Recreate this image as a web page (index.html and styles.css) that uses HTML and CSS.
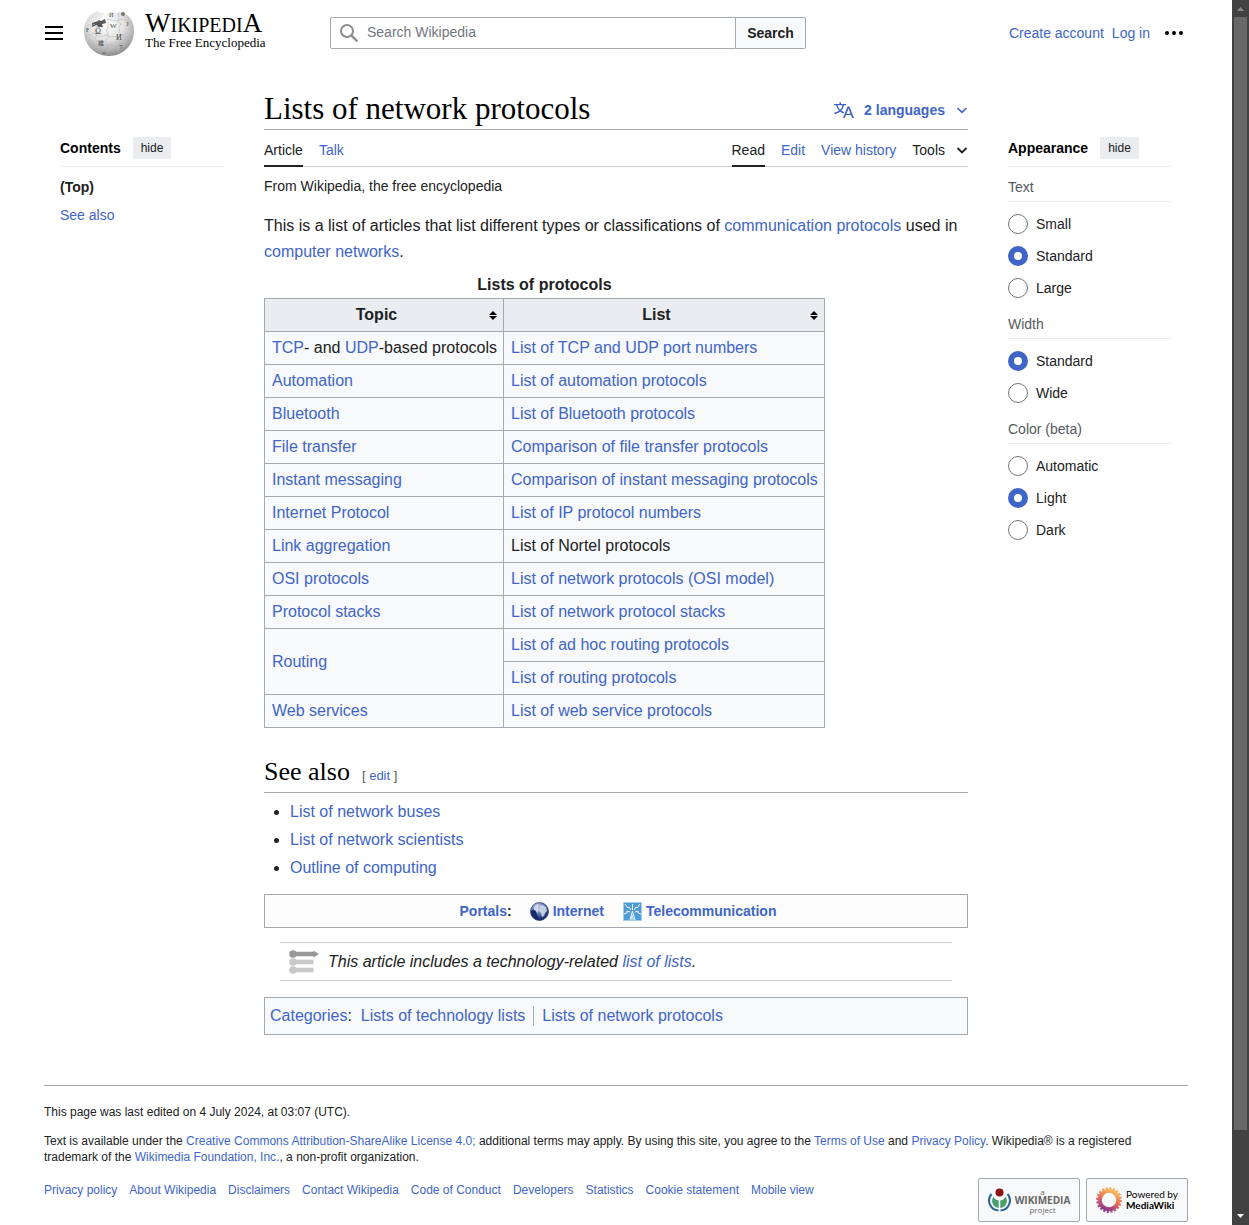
FILE: index.html
```html
<!DOCTYPE html>
<html lang="en">
<head>
<meta charset="utf-8">
<meta name="viewport" content="width=device-width, initial-scale=1">
<title>Lists of network protocols - Wikipedia</title>
<link rel="stylesheet" href="styles.css">
</head>
<body>
<div class="page">
  <header class="header">
    <button class="icon-button menu-button" type="button" aria-label="Main menu">
      <svg width="20" height="20" viewBox="0 0 20 20"><path d="M1 3h18v2H1zm0 6h18v2H1zm0 6h18v2H1z"/></svg>
    </button>
    <a class="logo" href="#">
      <svg class="globe" width="50" height="46" viewBox="0 0 50 46" aria-hidden="true">
        <defs>
          <radialGradient id="ball" cx="45%" cy="30%" r="70%">
            <stop offset="0" stop-color="#fff"/><stop offset=".5" stop-color="#e2e2e2"/><stop offset=".85" stop-color="#aaa"/><stop offset="1" stop-color="#888"/>
          </radialGradient>
        </defs>
        <path fill="url(#ball)" d="M11 2l4-1 1 2 4 0-1 4-4 2-2 4 3 1 6-2 2-4-1-4 4-2 5 1 4-1 4 2 3 1c5 4 7 9 7 16 0 14-11 25-25 25S0 35 0 21C0 13 4 6 11 2z"/>
        <path fill="#5a5a5a" d="M8 13l6-2 1-1 2 1 4-2 1 4-4 1 1 3-5 0-1-2-5 2z"/>
        <path fill="none" stroke="#bbb" stroke-width=".6" d="M3 14l5 2 2-2 3 3 3 1M1 25l7 0 1-2 2 0 1 3 9 0 1-2 2 1 1 2 11-1 1-2 2 0 1 3 8-2M5 36l7-1 1 2 2 0 0-3 11 2 1-2 2 1 0 2 10-3 1-2 3 0M12 16l1 9-2 3 2 3-1 5 4 7M24 12l0 6-2 2 2 3 0 5-3 3 3 3 0 10M35 4l-1 8 3 2-2 3 1 9-2 3 2 2-2 12M23 9l10 2 4-2 8 2"/>
        <circle cx="39" cy="4" r="2" fill="#777"/>
        <g fill="#444" font-family="Liberation Serif, serif" font-size="8">
          <text x="11" y="24">Ω</text><text x="26" y="18" font-size="7">W</text><text x="42" y="16" font-size="7">J</text><text x="32" y="30">И</text><text x="14" y="35" font-size="6" font-family="Noto Sans CJK JP, sans-serif">維</text><text x="25" y="7" font-size="6">И</text><text x="35" y="39" font-size="7">7</text><text x="2" y="22" font-size="6">F</text><text x="19" y="44" font-size="5">n</text>
        </g>
      </svg>
      <span class="logo-text">
        <span class="wordmark"><span class="cap">W</span>IKIPEDI<span class="cap">A</span></span>
        <span class="tagline">The Free Encyclopedia</span>
      </span>
    </a>
    <form class="search" role="search">
      <label class="search-field">
        <svg width="20" height="20" viewBox="0 0 20 20" fill="none" stroke="#8d8d8d" aria-hidden="true"><circle cx="8" cy="8" r="6" stroke-width="2"/><path d="M12.3 12.3l6 6" stroke-width="2.4"/></svg>
        <input type="search" placeholder="Search Wikipedia" aria-label="Search Wikipedia">
      </label>
      <button class="search-button" type="button">Search</button>
    </form>
    <nav class="user-links" aria-label="Personal tools">
      <a href="#">Create account</a>
      <a href="#">Log in</a>
      <button class="icon-button dots" type="button" aria-label="More options">
        <svg width="20" height="20" viewBox="0 0 20 20"><circle cx="3" cy="10" r="2"/><circle cx="10" cy="10" r="2"/><circle cx="17" cy="10" r="2"/></svg>
      </button>
    </nav>
  </header>

  <div class="columns">
    <nav class="side toc" aria-label="Contents">
      <div class="side-head"><h2>Contents</h2><button class="hide" type="button">hide</button></div>
      <ul class="toc-list">
        <li><a class="current" href="#">(Top)</a></li>
        <li><a href="#see-also">See also</a></li>
      </ul>
    </nav>

    <main class="content">
      <div class="title-row">
        <h1>Lists of network protocols</h1>
        <button class="languages" type="button">
          <svg width="20" height="20" viewBox="0 0 20 20" fill="currentColor" aria-hidden="true"><path d="M20 18h-1.44a.6.6 0 0 1-.4-.12.8.8 0 0 1-.23-.31L17 15h-5l-1 2.54a.8.8 0 0 1-.22.3.6.6 0 0 1-.4.14H9l4.55-11.47h1.89zm-3.53-4.31L14.89 9.5a12 12 0 0 1-.39-1.24q-.09.37-.19.69l-.19.56-1.58 4.19zm-6.3-1.58a13.4 13.4 0 0 1-2.91-1.41 11.46 11.46 0 0 0 2.81-5.37H12V4H7.31a4 4 0 0 0-.2-.56C6.87 2.79 6.6 2 6.6 2l-1.47.5s.4.89.6 1.5H0v1.33h2.15A11.23 11.23 0 0 0 5 10.7a17.2 17.2 0 0 1-5 2.1q.56.82.87 1.38a23.3 23.3 0 0 0 5.22-2.51 15.6 15.6 0 0 0 3.56 1.77zM3.63 5.33h4.91a8.1 8.1 0 0 1-2.45 4.45 9.1 9.1 0 0 1-2.46-4.45"/></svg>
          <span>2 languages</span>
          <svg width="12" height="12" viewBox="0 0 12 12" fill="none" stroke="currentColor" stroke-width="1.6" aria-hidden="true"><path d="M1.5 4L6 8.4 10.500 4"/></svg>
        </button>
      </div>
      <div class="toolbar">
        <nav class="tabs" aria-label="Namespaces"><a class="active" href="#">Article</a><a href="#">Talk</a></nav>
        <nav class="tabs" aria-label="Views"><a class="active" href="#">Read</a><a href="#">Edit</a><a href="#">View history</a>
          <button class="tools" type="button"><span>Tools</span>
            <svg width="12" height="12" viewBox="0 0 12 12" fill="none" stroke="#202122" stroke-width="1.8" aria-hidden="true"><path d="M1.500 4L6 8.400 10.500 4"/></svg>
          </button>
        </nav>
      </div>
      <p class="site-sub">From Wikipedia, the free encyclopedia</p>
      <p class="intro">This is a list of articles that list different types or classifications of <a href="#">communication protocols</a> used in <a href="#">computer networks</a>.</p>

      <table class="wikitable">
        <caption>Lists of protocols</caption>
        <thead>
          <tr>
            <th scope="col"><div class="sort"><span>Topic</span><svg width="8" height="9" viewBox="0 0 8 9" aria-hidden="true"><path d="M4 0l4 4H0zM0 5h8L4 9z"/></svg></div></th>
            <th scope="col"><div class="sort"><span>List</span><svg width="8" height="9" viewBox="0 0 8 9" aria-hidden="true"><path d="M4 0l4 4H0zM0 5h8L4 9z"/></svg></div></th>
          </tr>
        </thead>
        <tbody>
          <tr><td><a href="#">TCP</a>- and <a href="#">UDP</a>-based protocols</td><td><a href="#">List of TCP and UDP port numbers</a></td></tr>
          <tr><td><a href="#">Automation</a></td><td><a href="#">List of automation protocols</a></td></tr>
          <tr><td><a href="#">Bluetooth</a></td><td><a href="#">List of Bluetooth protocols</a></td></tr>
          <tr><td><a href="#">File transfer</a></td><td><a href="#">Comparison of file transfer protocols</a></td></tr>
          <tr><td><a href="#">Instant messaging</a></td><td><a href="#">Comparison of instant messaging protocols</a></td></tr>
          <tr><td><a href="#">Internet Protocol</a></td><td><a href="#">List of IP protocol numbers</a></td></tr>
          <tr><td><a href="#">Link aggregation</a></td><td>List of Nortel protocols</td></tr>
          <tr><td><a href="#">OSI protocols</a></td><td><a href="#">List of network protocols (OSI model)</a></td></tr>
          <tr><td><a href="#">Protocol stacks</a></td><td><a href="#">List of network protocol stacks</a></td></tr>
          <tr><td rowspan="2"><a href="#">Routing</a></td><td><a href="#">List of ad hoc routing protocols</a></td></tr>
          <tr><td><a href="#">List of routing protocols</a></td></tr>
          <tr><td><a href="#">Web services</a></td><td><a href="#">List of web service protocols</a></td></tr>
        </tbody>
      </table>

      <div class="section-head" id="see-also">
        <h2>See also</h2>
        <span class="edit">[ <a href="#">edit</a> ]</span>
      </div>
      <ul class="bullets">
        <li><a href="#">List of network buses</a></li>
        <li><a href="#">List of network scientists</a></li>
        <li><a href="#">Outline of computing</a></li>
      </ul>

      <div class="portals">
        <span class="portals-label"><a href="#">Portals</a>:</span>
        <span class="portal portal-internet">
          <svg width="19" height="19" viewBox="0 0 19 19" aria-hidden="true">
            <defs><radialGradient id="earth" cx="40%" cy="25%" r="75%"><stop offset="0" stop-color="#c4cfe6"/><stop offset=".5" stop-color="#6279b0"/><stop offset="1" stop-color="#0d2160"/></radialGradient></defs>
            <circle cx="9.500" cy="9.500" r="9" fill="url(#earth)" stroke="#33406b" stroke-width=".8"/>
            <path fill="#142b70" d="M1 9l3-2 2 2 1 4 2 2-1 3C4 17 1 14 1 9z"/>
            <path fill="#d5ddec" opacity=".85" d="M4 5l3-3 2 1-1 3 1 2-2 3-1-2-2-1zM10 4l2-1 4 2 1 4-2 2-1 3-2 1-1-4-2-2z"/>
          </svg>
          <a href="#">Internet</a>
        </span>
        <span class="portal portal-telecom">
          <svg width="19" height="19" viewBox="0 0 19 19" aria-hidden="true">
            <path fill="#4f9bd5" stroke="#a5cdea" d="M.5.500h18v18H.5z"/>
            <path fill="none" stroke="#eef6fc" stroke-width="1" d="M9.500 8v-6M8 8L6 5 5 6 2 2M11 8l2-3 1 1 3-4M7 10l-3-1 0 2-3 1M12 10l3-1 0 2 3 1M9.500 9L7 18M9.500 9l2.500 9M8.500 13h2l-3 4h4l-3-3"/>
          </svg>
          <a href="#">Telecommunication</a>
        </span>
      </div>

      <div class="notice">
        <svg width="30" height="24" viewBox="0 0 30 24" aria-hidden="true">
          <g fill="#c8c8c8"><circle cx="4" cy="12" r="3.800"/><path d="M4 9.700h20.500v4.600H4z"/><circle cx="4" cy="20" r="3.800"/><path d="M4 17.700h20.500v4.600H4z"/></g>
          <path fill="#989898" d="M4 1.700h20.500V.500L30 4l-5.500 3.500V6.300H4z"/><circle cx="4" cy="4" r="3.800" fill="#989898"/>
        </svg>
        <i>This article includes a technology-related <a href="#">list of lists</a>.</i>
      </div>

      <div class="categories">
        <span><a href="#">Categories</a>:</span>
        <ul>
          <li><a href="#">Lists of technology lists</a></li>
          <li><a href="#">Lists of network protocols</a></li>
        </ul>
      </div>
    </main>

    <aside class="side appearance">
      <div class="side-head"><h2>Appearance</h2><button class="hide" type="button">hide</button></div>
      <fieldset>
        <legend>Text</legend>
        <label><input type="radio" name="text"><span>Small</span></label>
        <label><input type="radio" name="text" checked><span>Standard</span></label>
        <label><input type="radio" name="text"><span>Large</span></label>
      </fieldset>
      <fieldset>
        <legend>Width</legend>
        <label><input type="radio" name="width" checked><span>Standard</span></label>
        <label><input type="radio" name="width"><span>Wide</span></label>
      </fieldset>
      <fieldset>
        <legend>Color (beta)</legend>
        <label><input type="radio" name="color"><span>Automatic</span></label>
        <label><input type="radio" name="color" checked><span>Light</span></label>
        <label><input type="radio" name="color"><span>Dark</span></label>
      </fieldset>
    </aside>
  </div>

  <footer class="footer">
    <p>This page was last edited on 4 July 2024, at 03:07 (UTC).</p>
    <p>Text is available under the <a href="#">Creative Commons Attribution-ShareAlike License 4.0;</a> additional terms may apply. By using this site, you agree to the <a href="#">Terms of Use</a> and <a href="#">Privacy Policy</a>. Wikipedia® is a registered trademark of the <a href="#">Wikimedia Foundation, Inc.</a>, a non-profit organization.</p>
    <div class="footer-row">
      <nav class="footer-links" aria-label="Footer">
        <a href="#">Privacy policy</a><a href="#">About Wikipedia</a><a href="#">Disclaimers</a><a href="#">Contact Wikipedia</a><a href="#">Code of Conduct</a><a href="#">Developers</a><a href="#">Statistics</a><a href="#">Cookie statement</a><a href="#">Mobile view</a>
      </nav>
      <div class="badges">
        <a class="badge" href="#">
          <svg width="23" height="24" viewBox="0 0 23 24" aria-hidden="true">
            <path fill="none" stroke="#2a6496" stroke-width="2" d="M3.500 6a10 10 0 0 0 7 16.500M19.500 6a10 10 0 0 1-7 16.500"/>
            <path fill="#4a9e6b" d="M5.800 8.500c.5 2.500 2 3.500 4.900 4v7.500A7 7 0 0 1 5.800 8.500zM17.200 8.500c-.5 2.500-2 3.500-4.900 4v7.500a7 7 0 0 0 4.900-11.500z"/>
            <circle cx="11.500" cy="4.500" r="4" fill="#8e1313"/>
          </svg>
          <span class="wikimedia"><small>a</small><b>WIKIMEDIA</b><small>project</small></span>
        </a>
        <a class="badge" href="#">
          <svg width="26" height="26" viewBox="-13 -13 26 26" aria-hidden="true">
            <defs>
              <linearGradient id="sun" x1=".7" y1="0" x2=".3" y2="1"><stop offset="0" stop-color="#fbbc5c"/><stop offset=".5" stop-color="#ee6c55"/><stop offset="1" stop-color="#8c3a8e"/></linearGradient>
            </defs>
            <circle r="9.200" fill="none" stroke="url(#sun)" stroke-width="4"/>
            <circle r="11.600" fill="none" stroke="url(#sun)" stroke-width="2.600" stroke-dasharray="2 1.644"/>
          </svg>
          <span class="mediawiki">Powered by<b>MediaWiki</b></span>
        </a>
      </div>
    </div>
  </footer>
</div>
<div class="scrollbar" aria-hidden="true">
  <svg class="up" width="7" height="4" viewBox="0 0 7 4"><path d="M0 4l3.500-4L7 4z"/></svg>
  <div class="thumb"></div>
  <svg class="down" width="7" height="4" viewBox="0 0 7 4"><path d="M0 0h7L3.500 4z"/></svg>
</div>
</body>
</html>
```
FILE: styles.css
```css
* { box-sizing: border-box; }

html { scrollbar-width: none; }

body {
  margin: 0;
  display: flex;
  align-items: flex-start;
  background: #fff;
  color: #202122;
  font: 14px/22px "Liberation Sans", Arial, sans-serif;
}

a { color: #4065c8; text-decoration: none; }
a:hover { text-decoration: underline; }
h1, h2, p, ul, fieldset { margin: 0; padding: 0; }
ul { list-style: none; }
button { font: inherit; color: inherit; border: 0; background: none; padding: 0; cursor: pointer; }
svg { display: block; flex: none; }

.page { flex: 1; min-width: 0; padding: 0 44px; }

/* Header */
.header { display: flex; align-items: center; height: 66px; }
.menu-button { margin-right: 20px; }
.logo { display: flex; align-items: center; gap: 11px; width: 246px; color: #000; }
.logo:hover { text-decoration: none; }
.logo-text { padding-bottom: 4px; font-family: "Liberation Serif", serif; white-space: nowrap; }
.wordmark { display: block; font-size: 20px; line-height: 22px; }
.cap { font-size: 27px; }
.tagline { display: block; font-size: 13px; line-height: 14px; }
.search { display: flex; flex: 0 1 476px; height: 32px; }
.search-field {
  display: flex; align-items: center; gap: 8px; flex: 1;
  padding-left: 8px; border: 1px solid #a2a9b1; border-radius: 2px 0 0 2px;
}
.search-field input {
  flex: 1; min-width: 0; padding: 0 0 2px; border: 0; outline: 0; background: none;
  font: inherit; color: inherit;
}
.search-field input::placeholder { color: #72777d; }
.search-button {
  width: 70px; border: 1px solid #a2a9b1; border-left: 0; border-radius: 0 2px 2px 0;
  background: #f8f9fa; font-weight: bold;
}
.user-links { display: flex; align-items: center; gap: 8px; margin-left: auto; padding-right: 4px; }
.dots { margin-left: 6px; }

/* Three-column body */
.columns { display: grid; grid-template-columns: 180px minmax(0, 1fr) 180px; gap: 40px; padding-top: 22px; }
.side { padding-top: 42px; }
.toc { padding-left: 16px; }
.appearance { padding-right: 16px; }
.side-head { display: flex; align-items: center; gap: 12px; height: 37px; border-bottom: 1px solid #eaecf0; }
.side-head h2 { font-size: 14px; color: #000; }
.hide { height: 22px; padding: 0 8px; border-radius: 2px; background: #eaecf0; font-size: 12px; }
.toc-list { padding-top: 6px; }
.toc-list li { padding: 3px 0; }
.current { color: #202122; font-weight: bold; }

fieldset { border: 0; min-width: 0; padding-top: 9px; }
legend { float: left; width: 100%; padding: 0 0 3px; margin-bottom: 6px; border-bottom: 1px solid #eaecf0; color: #54595d; }
fieldset label { display: flex; align-items: center; gap: 8px; height: 32px; clear: both; }
input[type="radio"] {
  appearance: none; width: 20px; height: 20px; margin: 0;
  border: 1px solid #72777d; border-radius: 50%; background: #fff;
}
input[type="radio"]:checked { border: 6px solid #4065c8; }

/* Article heading and tabs */
.title-row { display: flex; align-items: center; height: 42px; border-bottom: 1px solid #a2a9b1; }
h1, .section-head h2 { font-family: "Liberation Serif", serif; font-weight: normal; color: #000; }
h1 { flex: 1; font-size: 31px; line-height: 40px; }
.languages { display: flex; align-items: center; padding-top: 2px; color: #4065c8; font-weight: bold; }
.languages span { margin: 0 11px 0 10px; }
.toolbar { display: flex; justify-content: space-between; height: 37px; border-bottom: 1px solid #c8ccd1; }
.tabs { display: flex; gap: 16px; }
.tabs a { height: 37px; padding-top: 9px; }
.tabs .active { color: #202122; border-bottom: 2px solid #202122; }
.tools { display: flex; align-items: center; gap: 11px; height: 37px; padding-top: 3px; }
.site-sub { padding-top: 8px; }

/* Article text */
.intro, .wikitable, .bullets, .notice, .categories { font-size: 16px; line-height: 26px; }
.intro { padding: 16px 0 7px; }
.wikitable { border-collapse: collapse; background: #f8f9fa; }
.wikitable caption { font-weight: bold; }
.wikitable th, .wikitable td { border: 1px solid #a2a9b1; padding: 3px 6px 3px 7px; text-align: left; }
.wikitable th { background: #eaecf0; }
.sort { display: flex; align-items: center; gap: 8px; }
.sort span { flex: 1; text-align: center; }

.section-head { display: flex; align-items: baseline; gap: 12px; margin-top: 26px; padding-bottom: 3px; border-bottom: 1px solid #a2a9b1; }
.section-head h2 { font-size: 26px; line-height: 35px; }
.edit { font-size: 13px; color: #54595d; }
.bullets { padding: 6px 0 0 26px; list-style: disc; }
.bullets li { margin-bottom: 2px; }

.portals {
  display: flex; justify-content: center; align-items: center; height: 34px; margin-top: 13px; padding-left: 4px;
  border: 1px solid #a2a9b1; background: #fdfdfd; font-weight: bold;
}
.portals-label { margin-right: 18px; }
.portal { display: flex; align-items: center; gap: 4px; }
.portal-internet { margin-right: 19px; }

.notice {
  display: flex; align-items: center; gap: 9px; height: 39px; margin: 14px 16px 16px; padding-left: 9px;
  border: 1px solid #c8ccd1; border-width: 1px 0;
}
.categories { display: flex; gap: 9px; padding: 5px; border: 1px solid #a2a9b1; background: #f8f9fa; }
.categories ul { display: flex; align-items: center; }
.categories li { line-height: 20px; padding: 0 8px; border-left: 1px solid #a2a9b1; }
.categories li:first-child { padding-left: 0; border-left: 0; }

/* Footer */
.footer { margin-top: 50px; padding: 18px 0 3px; border-top: 1px solid #a2a9b1; font-size: 12px; line-height: 16px; }
.footer p { margin-bottom: 13px; }
.footer-row { display: flex; justify-content: space-between; align-items: flex-start; }
.footer-links { display: flex; flex-wrap: wrap; gap: 12px; padding-top: 4px; }
.badges { display: flex; gap: 6px; }
.badge {
  display: flex; align-items: center; justify-content: center; gap: 4px; width: 102px; height: 44px;
  border: 1px solid #a2a9b1; border-radius: 2px; background: #f8f9fa;
}
.badge:hover { text-decoration: none; }
.wikimedia { display: flex; flex-direction: column; align-items: center; font: 10px/9px "Open Sans", sans-serif; color: #666; }
.wikimedia small { font-size: 8px; }
.mediawiki { display: flex; flex-direction: column; font: 10px/11px Lato, sans-serif; color: #000; }

/* Window scrollbar */
.scrollbar {
  position: sticky; top: 0; flex: none; display: flex; flex-direction: column; align-items: center;
  width: 17px; height: 100vh; background: #424242;
}
.up { margin: 7px 0 6px; fill: #8a8a8a; }
.thumb { flex: 1; width: 13px; margin-bottom: 84px; background: #686868; }
.down { margin-bottom: 7px; fill: #fff; }
```
